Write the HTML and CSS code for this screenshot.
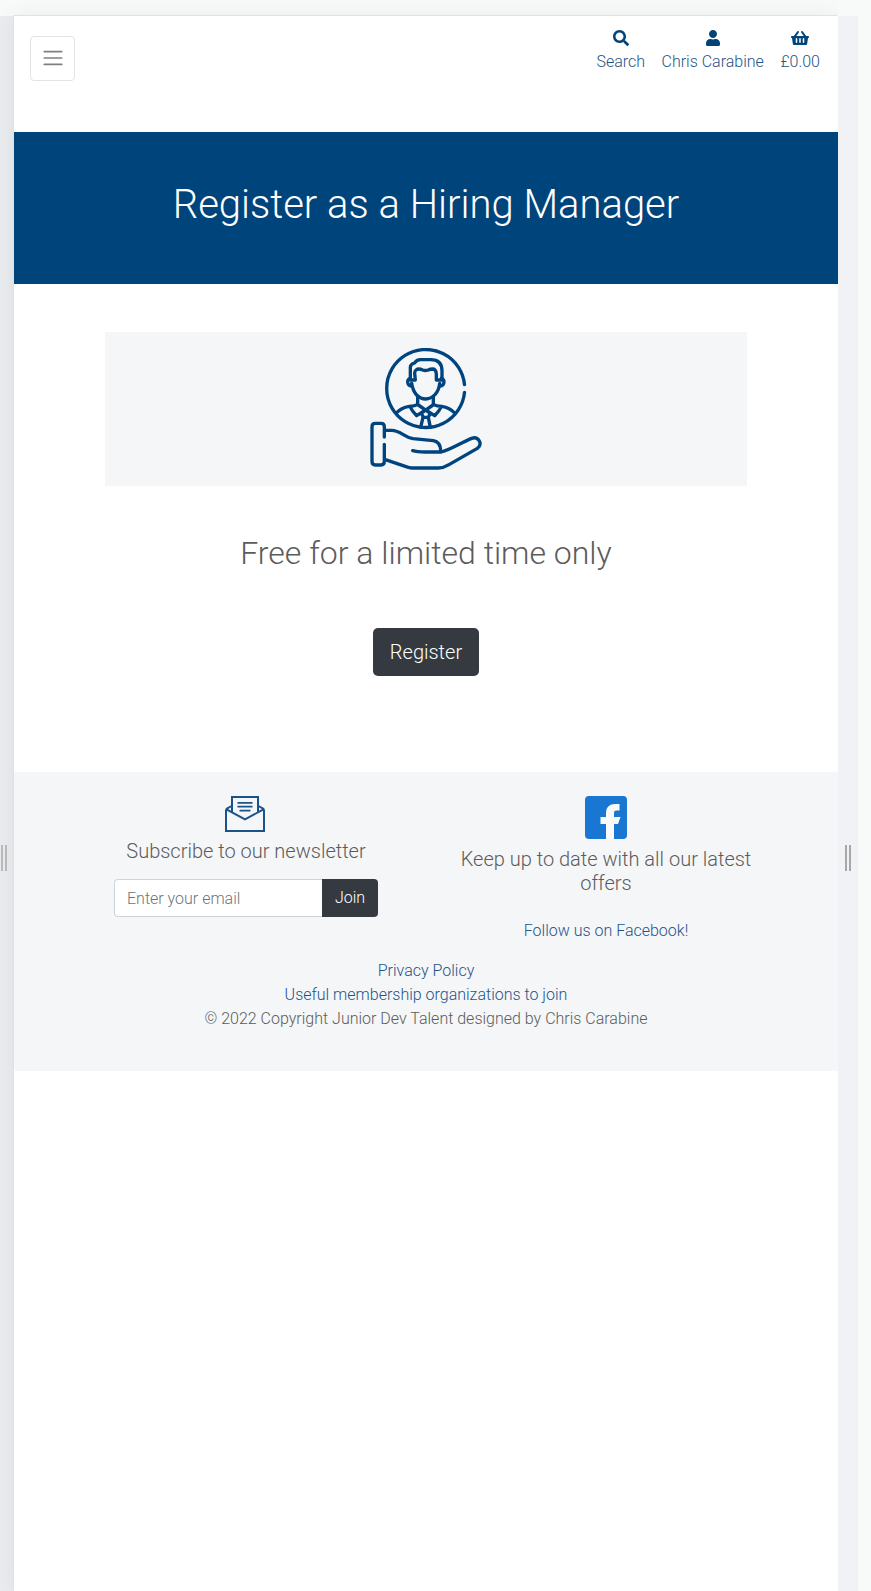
FILE: index.html
```html
<!DOCTYPE html>
<html lang="en">
<head>
<meta charset="utf-8">
<title>Register as a Hiring Manager</title>
<link rel="stylesheet" href="styles.css">
</head>
<body>
<div class="viewer">
  <div class="rail rail-left"><span class="grip"></span></div>
  <div class="page">
    <nav class="navbar">
      <button class="toggler" aria-label="Menu">
        <svg width="30" height="30" viewBox="0 0 30 30"><path stroke="rgba(0,0,0,.5)" stroke-linecap="round" stroke-miterlimit="10" stroke-width="2" d="M4 7h22M4 15h22M4 23h22"/></svg>
      </button>
      <ul class="nav-links">
        <li><a href="#"><svg width="16" height="16" viewBox="0 0 512 512"><path d="M505 442.7L405.3 343c-4.500-4.500-10.600-7-17-7H372c27.600-35.300 44-79.700 44-128C416 93.100 322.900 0 208 0S0 93.100 0 208s93.100 208 208 208c48.300 0 92.700-16.400 128-44v16.300c0 6.400 2.500 12.500 7 17l99.700 99.700c9.400 9.400 24.600 9.400 33.900 0l28.300-28.300c9.400-9.400 9.400-24.600.1-34zM208 336c-70.700 0-128-57.200-128-128 0-70.700 57.200-128 128-128 70.700 0 128 57.200 128 128 0 70.700-57.200 128-128 128z"/></svg><span>Search</span></a></li>
        <li><a href="#"><svg width="14" height="16" viewBox="0 0 448 512"><path d="M224 256c70.700 0 128-57.300 128-128S294.700 0 224 0 96 57.300 96 128s57.300 128 128 128zm89.600 32h-16.700c-22.200 10.200-46.900 16-72.900 16s-50.600-5.800-72.900-16h-16.700C60.200 288 0 348.200 0 422.400V464c0 26.500 21.500 48 48 48h352c26.500 0 48-21.500 48-48v-41.600c0-74.200-60.200-134.400-134.400-134.400z"/></svg><span>Chris Carabine</span></a></li>
        <li><a href="#"><svg width="18" height="16" viewBox="0 0 576 512"><path d="M576 216v16c0 13.255-10.745 24-24 24h-8l-26.113 182.788C514.509 462.435 494.257 480 470.370 480H105.630c-23.887 0-44.139-17.565-47.518-41.212L32 256h-8c-13.255 0-24-10.745-24-24v-16c0-13.255 10.745-24 24-24h67.341l106.780-146.821c10.395-14.292 30.407-17.453 44.701-7.058 14.293 10.395 17.453 30.408 7.058 44.701L170.477 192h235.046L326.120 82.821c-10.395-14.292-7.234-34.306 7.059-44.701 14.291-10.395 34.306-7.235 44.701 7.058L484.659 192H552c13.255 0 24 10.745 24 24zM312 392V280c0-13.255-10.745-24-24-24s-24 10.745-24 24v112c0 13.255 10.745 24 24 24s24-10.745 24-24zm112 0V280c0-13.255-10.745-24-24-24s-24 10.745-24 24v112c0 13.255 10.745 24 24 24s24-10.745 24-24zm-224 0V280c0-13.255-10.745-24-24-24s-24 10.745-24 24v112c0 13.255 10.745 24 24 24s24-10.745 24-24z"/></svg><span>£0.00</span></a></li>
      </ul>
    </nav>
    <header class="banner"><h1>Register as a Hiring Manager</h1></header>
    <main class="content">
      <div class="feature">
        <svg class="manager" width="112" height="122" viewBox="60 84 336 366">
          <path d="M343.500 217A117 117 0 1 1 343.500 194"/>
          <path d="M196 180h-15v-38q0-10 13-13 6-10 17-10h31c25 0 34 14 34 34v27h-17v-18q-1-14-10-15-9 0-14 3-9 3-17 0-12-6-20 0-4 3-4 10z"/>
          <path d="M181 175q-8 3-8 10 0 12 13 14M274 175q8 3 8 10 0 12-13 14M185 190q3 22 15 35 12 12 27 12t28-13q12-13 14-34"/>
          <path d="M203 231v22q-8 5-25 6-25 4-39 20M250 231v22q8 5 25 6 25 4 39 20M203 253l24 17 24-17M180 260q7 15 20 27l27-17 27 17q13-12 20-27M214 280l6 12h15l6-12M219 292l-7 30M235 292l6 30M206 256l35 24M248 256l-35 24"/>
          <path d="M103 351v-31q0-10-10-10H76q-10 0-10 10v104q0 11 10 11h17q10 0 10-11v-51"/>
          <path d="M105 331h19c30 1 38 21 65 25l61 6q22 4 22 31M188 392q12 4 38 4h48c30-9 59-28 91-41 19-7 35 16 17 30L297 434q-16 10-32 10h-79q-8 0-18-4l-62-21"/>
        </svg>
      </div>
      <h2>Free for a limited time only</h2>
      <a class="btn btn-large" href="#">Register</a>
    </main>
    <footer class="footer">
      <div class="columns">
        <section class="column">
          <svg class="letter" width="40" height="36" viewBox="0 0 40 37" preserveAspectRatio="none"><path class="edge" d="M1 13.500V36h38V13.500M1 13.500 20 24l19-10.500M1 13.500 7 10M39 13.500 33 10M7 16V1h26v15"/><path class="lines" d="M12.500 7h15M12.500 11h15M14.500 15h11"/></svg>
          <h5>Subscribe to our newsletter</h5>
          <form class="subscribe"><input type="email" placeholder="Enter your email"><button type="button" class="btn">Join</button></form>
        </section>
        <section class="column">
          <svg class="facebook" width="42" height="43" viewBox="0 0 42 43"><rect width="42" height="43" rx="4" fill="#1976d2"/><path fill="#fafafa" d="M21 43V28h-5.500v-7H21v-4c0-6 4-9 9-9h4.500v6.500h-3c-2 0-2.500 1-2.500 3V21H35.500l-2.500 7h-4v15z"/></svg>
          <h5 class="offers">Keep up to date with all our latest offers</h5>
          <a class="follow" href="#">Follow us on Facebook!</a>
        </section>
      </div>
      <div class="legal">
        <a href="#">Privacy Policy</a>
        <a href="#">Useful membership organizations to join</a>
        <span>© 2022 Copyright Junior Dev Talent designed by Chris Carabine</span>
      </div>
    </footer>
  </div>
  <div class="rail rail-right"><span class="grip"></span></div>
</div>
</body>
</html>
```
FILE: styles.css
```css
* { box-sizing: border-box; }
body {
  margin: 0;
  height: 1591px;
  overflow: hidden;
  background: #f8faf9;
  font: 300 16px/24px Roboto, sans-serif;
  color: #5c5c5c;
}
h1, h2, h5 { margin: 0; font-weight: 300; line-height: 1.2; }
a { color: #1f5488; text-decoration: none; }
svg { display: block; }

.viewer {
  display: grid;
  grid-template-columns: 14px 824px 20px;
  height: 1591px;
  padding-top: 16px;
}
.rail { padding-top: 829px; }
.rail-left { background: #eaebef; padding-left: 1px; }
.rail-right { background: #f1f2f5; padding-left: 7px; }
.grip {
  display: block;
  width: 6px;
  height: 26px;
  border: solid #bbbdbd;
  border-width: 0 2px;
}
.rail-right .grip { border-color: #a7a7a7; }

.page {
  background: #fff;
  box-shadow: -1px -1px 0 #dfe1e2, 0 0 22px rgba(0, 0, 0, .06);
  clip-path: inset(-16px 0 0 -14px);
}

.navbar {
  display: flex;
  justify-content: space-between;
  align-items: flex-start;
  height: 116px;
  padding: 10px 18px 0 16px;
}
.toggler {
  display: flex;
  align-items: center;
  justify-content: center;
  width: 45px;
  height: 45px;
  margin-top: 10px;
  padding: 0 0 2px;
  background: transparent;
  border: 1px solid #e3e3e3;
  border-radius: 4px;
}
.toggler svg { width: 24px; height: 24px; }
.nav-links { display: flex; gap: 16.5px; margin: 0; padding: 0; list-style: none; }
.nav-links a { display: flex; flex-direction: column; align-items: center; padding-top: 4px; }
.nav-links svg { fill: #00447c; margin-bottom: 4px; }

.banner { height: 152px; padding-top: 49px; background: #00447c; color: #fff; text-align: center; }
.banner h1 { font-size: 40px; }

.content {
  display: flex;
  flex-direction: column;
  align-items: center;
  height: 488px;
  padding-top: 48px;
}
.feature {
  display: flex;
  justify-content: center;
  width: 642px;
  height: 154px;
  padding-top: 16px;
  background: #f4f6f8;
}
.manager { fill: none; stroke: #00447f; stroke-width: 10; stroke-linecap: round; stroke-linejoin: round; }
.content h2 { margin: 48px 0 55.6px; font-size: 32px; }
.btn { border: 0; background: #343a40; color: #fff; font: 300 16px/24px Roboto, sans-serif; text-align: center; }
.btn-large { width: 106px; height: 48px; border-radius: 5px; font-size: 20px; line-height: 48px; }

.footer { height: 299px; padding: 24px 52px 0; background: #f4f6f8; }
.columns { display: grid; grid-template-columns: 1fr 1fr; height: 163px; }
.column { display: flex; flex-direction: column; align-items: center; text-align: center; }
.column h5 { font-size: 20px; }
.letter { margin: 0 2px 7px 0; fill: none; stroke: #1a5289; stroke-width: 2; }
.letter .lines { stroke-width: 1.8; }
.subscribe { display: flex; width: 264px; height: 38px; margin-top: 16px; }
.subscribe input {
  flex: 1;
  min-width: 0;
  padding: 2px 12px 0;
  border: 1px solid #ced4da;
  border-right: 0;
  border-radius: 4px 0 0 4px;
  background: #fff;
  font: inherit;
}
.subscribe input::placeholder { color: #6c757d; }
.subscribe .btn { width: 56px; padding: 0 0 1px; border-radius: 0 4px 4px 0; }
.facebook { margin-bottom: 8px; }
.offers { width: 300px; }
.follow { margin-top: 24px; }
.legal { display: flex; flex-direction: column; align-items: center; }
```
